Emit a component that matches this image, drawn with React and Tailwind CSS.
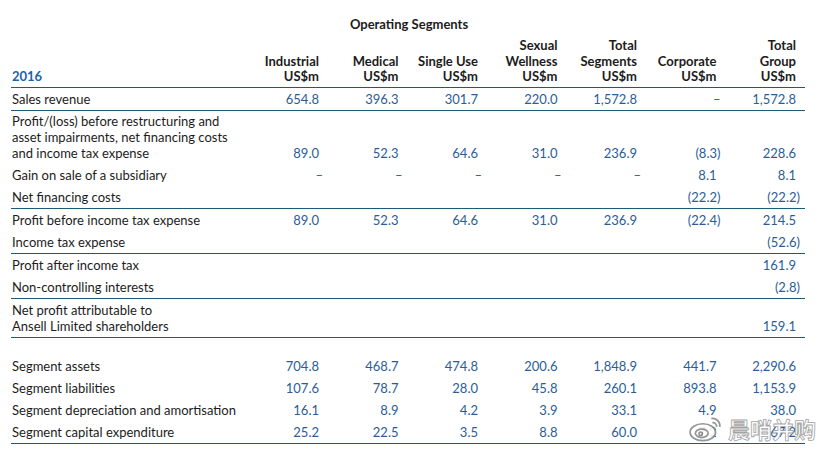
import React from 'react';

const cols = [
    ['', 'Industrial', 'US$m'],
    ['', 'Medical', 'US$m'],
    ['', 'Single Use', 'US$m'],
    ['Sexual', 'Wellness', 'US$m'],
    ['Total', 'Segments', 'US$m'],
    ['', 'Corporate', 'US$m'],
    ['Total', 'Group', 'US$m'],
];

// label lines, values, border below
const rows = [
    { label: ['Sales revenue'], values: ['654.8', '396.3', '301.7', '220.0', '1,572.8', '–', '1,572.8'], line: true },
    { label: ['Profit/(loss) before restructuring and', 'asset impairments, net financing costs', 'and income tax expense'], values: ['89.0', '52.3', '64.6', '31.0', '236.9', '(8.3)', '228.6'], tight: true },
    { label: ['Gain on sale of a subsidiary'], values: ['–', '–', '–', '–', '–', '8.1', '8.1'] },
    { label: ['Net financing costs'], values: ['', '', '', '', '', '(22.2)', '(22.2)'], line: true },
    { label: ['Profit before income tax expense'], values: ['89.0', '52.3', '64.6', '31.0', '236.9', '(22.4)', '214.5'] },
    { label: ['Income tax expense'], values: ['', '', '', '', '', '', '(52.6)'], line: true },
    { label: ['Profit after income tax'], values: ['', '', '', '', '', '', '161.9'] },
    { label: ['Non-controlling interests'], values: ['', '', '', '', '', '', '(2.8)'], line: true },
    { label: ['Net profit attributable to', 'Ansell Limited shareholders'], values: ['', '', '', '', '', '', '159.1'], line: true },
];

const segmentRows = [
    { label: 'Segment assets', values: ['704.8', '468.7', '474.8', '200.6', '1,848.9', '441.7', '2,290.6'] },
    { label: 'Segment liabilities', values: ['107.6', '78.7', '28.0', '45.8', '260.1', '893.8', '1,153.9'] },
    { label: 'Segment depreciation and amortisation', values: ['16.1', '8.9', '4.2', '3.9', '33.1', '4.9', '38.0'] },
    { label: 'Segment capital expenditure', values: ['25.2', '22.5', '3.5', '8.8', '60.0', '7.2', '67.2'] },
];

const grid = 'grid grid-cols-[1fr_repeat(7,79.5px)] pr-[9px]';

const Num = ({ v }) => {
    if (v.startsWith('(')) {
        return (
            <span>
                {v.slice(0, -1)}
                <span className="mr-[-4px]">)</span>
            </span>
        );
    }
    if (v === '–') return <span className="mr-[-4px]">–</span>;
    return <span>{v}</span>;
};

export default function App() {
    return (
        <div className="relative w-[824px] h-[451px] bg-white overflow-hidden font-['Lato','Liberation_Sans',sans-serif] text-[13px] text-[#1c1c1c]">
            <div className="ml-[11px] w-[794px]">
                <div className="pt-[16px] h-[38px] text-center font-bold leading-[17px] pl-[2px]">Operating Segments</div>

                <div className={`${grid} items-end border-b-[1.5px] border-[#1d5a76] pb-[2px]`}>
                    <div className="pl-[1px] font-bold text-[#2162a6] leading-[15.5px]">2016</div>
                    {cols.map((c, i) => (
                        <div key={i} className="text-right font-bold leading-[15.5px]">
                            {c[0] && <div>{c[0]}</div>}
                            <div>{c[1]}</div>
                            <div>{c[2]}</div>
                        </div>
                    ))}
                </div>

                {rows.map((r, i) => (
                    <div key={i} className={`${grid} items-end ${r.tight ? 'pt-[2px] pb-[3px]' : 'py-[3px]'} leading-[16px] ${r.line ? 'border-b-[1.5px] border-[#1d5a76]' : ''}`}>
                        <div className="pl-[1px]">
                            {r.label.map((l, j) => <div key={j}>{l}</div>)}
                        </div>
                        {r.values.map((v, j) => (
                            <div key={j} className="text-right text-[#2a5d98]"><Num v={v} /></div>
                        ))}
                    </div>
                ))}

                <div className="h-[17px]" />

                {segmentRows.map((r, i) => (
                    <div key={i} className={`${grid} items-end py-[3px] leading-[16px] ${i === segmentRows.length - 1 ? 'border-b-[1.5px] border-[#1d5a76]' : ''}`}>
                        <div className="pl-[1px]">{r.label}</div>
                        {r.values.map((v, j) => (
                            <div key={j} className="text-right text-[#2a5d98]"><Num v={v} /></div>
                        ))}
                    </div>
                ))}
            </div>

            {/* watermark */}
            <div className="absolute left-[688px] top-[413px] flex items-center gap-[4px] opacity-90">
                <svg width="36" height="30" viewBox="0 0 34 28" fill="none" stroke="#8a8a8a" strokeWidth="1.6">
                    <ellipse cx="14" cy="18" rx="12" ry="8" fill="#ffffff" />
                    <ellipse cx="13" cy="19" rx="6" ry="4" />
                    <circle cx="12" cy="19.5" r="1.6" />
                    <path d="M22 5 a7 7 0 0 1 8 8" />
                    <path d="M23 9 a3.5 3.5 0 0 1 4 4" />
                </svg>
                <span className="text-[22px] leading-none font-bold text-white font-['Noto_Sans_CJK_SC',sans-serif] [-webkit-text-stroke:0.8px_#9a9a9a]">晨哨并购</span>
            </div>
        </div>
    );
}
